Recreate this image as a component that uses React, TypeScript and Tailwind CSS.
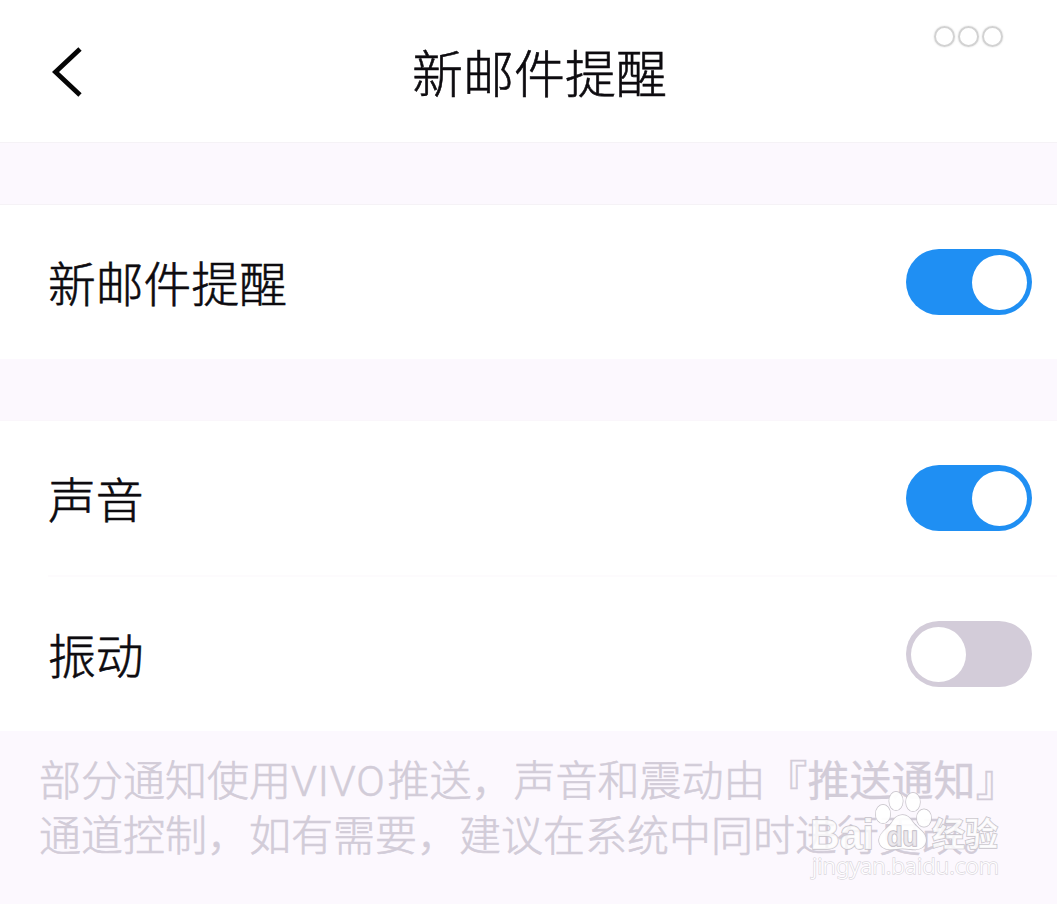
import { useState } from 'react'

type SwitchProps = {
  checked: boolean
  label: string
  onChange: () => void
}

function Switch({ checked, label, onChange }: SwitchProps) {
  return (
    <button
      role="switch"
      aria-checked={checked}
      aria-label={label}
      onClick={onChange}
      className={`flex h-[66px] w-[126px] shrink-0 items-center rounded-full px-[5px] ${checked ? 'justify-end bg-[#1f8ff3]' : 'justify-start bg-[#d3ccd9]'}`}
    >
      <span className="size-[55px] rounded-full bg-white" />
    </button>
  )
}

function Row({ checked, label, onChange }: SwitchProps) {
  return (
    <div className="flex h-[154px] items-center justify-between pr-[25px] pl-12">
      <span className="text-[47.8px] leading-none">{label}</span>
      <Switch checked={checked} label={label} onChange={onChange} />
    </div>
  )
}

function Watermark() {
  return (
    <svg
      className="absolute top-[785px] left-[800px] [-webkit-text-stroke:0]"
      width="210"
      height="100"
      viewBox="0 0 210 100"
      fill="#ffffff"
      fillOpacity="0.82"
      stroke="#c6c2c9"
      strokeWidth="1.4"
      paintOrder="stroke"
    >
      <text x="10" y="64" fontSize="42" fontWeight="700" textLength="64" lengthAdjust="spacingAndGlyphs" fontFamily="'Liberation Sans', sans-serif">Bai</text>
      <g fillOpacity="0.95">
        <ellipse cx="83" cy="29" rx="7.3" ry="9.3" />
        <ellipse cx="96" cy="16" rx="6.8" ry="9.3" />
        <ellipse cx="113" cy="17" rx="7" ry="9.3" />
        <ellipse cx="124" cy="33" rx="7.2" ry="8.8" />
      </g>
      <path d="M102.500 30c-6 0-8.500 4-11 8-4 6-12 9-12.500 17 0 6 5 9.500 11 9.500 5 0 8-1 12.500-1s8 1 13 1c6 0 10.500-4 10.500-9.500 0-8-8-11-12.500-17-3-4-5-8-11-8z" fillOpacity="0.92" />
      <text x="87" y="61" fontSize="27" textLength="31" lengthAdjust="spacingAndGlyphs" fontWeight="700" fill="#e9e6eb" stroke="#bfbac3" fontFamily="'Liberation Sans', sans-serif">du</text>
      <text x="132" y="61" fontSize="33" fontWeight="700" fontFamily="'Noto Sans CJK SC', sans-serif">经验</text>
      <text x="12" y="89" fontSize="22" textLength="187" lengthAdjust="spacingAndGlyphs" stroke="#dcd8df" fillOpacity="1" fontFamily="'Noto Sans', sans-serif">jingyan.baidu.com</text>
    </svg>
  )
}

export default function App() {
  const [mail, setMail] = useState(true)
  const [sound, setSound] = useState(true)
  const [vibration, setVibration] = useState(false)

  return (
    <div className="relative flex h-[904px] w-[1057px] flex-col overflow-hidden bg-[#fcf8fe] font-['Noto_Sans_CJK_SC',sans-serif] font-light text-[#0d0b0f] [-webkit-text-stroke:0.6px]">
      <header className="flex h-[143px] items-center justify-between border-b border-[#f5f2f6] bg-white pr-[53px] pl-[52px]">
        <button aria-label="返回" className="w-[70px] pt-0.5">
          <svg width="32" height="52" viewBox="0 0 32 52" fill="none" stroke="#050505" strokeWidth="4.8">
            <path d="M28 3 3.500 26 28 49" />
          </svg>
        </button>
        <h1 className="ml-[23px] text-[51px] leading-none">新邮件提醒</h1>
        <button aria-label="更多" className="flex w-[70px] -translate-y-[35px] gap-[3px]">
          <span className="size-[21px] shrink-0 rounded-full border-[2.5px] border-[#d2d2d2] shadow-[0_0_2px_#d8d8d8]" />
          <span className="size-[21px] shrink-0 rounded-full border-[2.5px] border-[#d2d2d2] shadow-[0_0_2px_#d8d8d8]" />
          <span className="size-[21px] shrink-0 rounded-full border-[2.5px] border-[#d2d2d2] shadow-[0_0_2px_#d8d8d8]" />
        </button>
      </header>

      <section className="mt-[61px] border-t border-[#f5f2f6] bg-white">
        <Row label="新邮件提醒" checked={mail} onChange={() => setMail(!mail)} />
      </section>

      <section className="mt-[61px] border-t border-[#faf6fb] bg-white">
        <Row label="声音" checked={sound} onChange={() => setSound(!sound)} />
        <div className="ml-12 h-0.5 bg-[#fdfbfd]" />
        <Row label="振动" checked={vibration} onChange={() => setVibration(!vibration)} />
      </section>

      <p className="pt-5 pl-[39px] text-[42px] leading-[54.5px] whitespace-nowrap text-[#d2ccd8]">
        部分通知使用<span className="pr-0.5 font-['Roboto',sans-serif] leading-none tracking-[0.8px]">VIVO</span>推送，声音和震动由『
        <span className="font-normal [-webkit-text-stroke:0.3px]">推送通知</span>』
        <br />
        通道控制，如有需要，建议在系统中同时进行更改。
      </p>

      <Watermark />
    </div>
  )
}
